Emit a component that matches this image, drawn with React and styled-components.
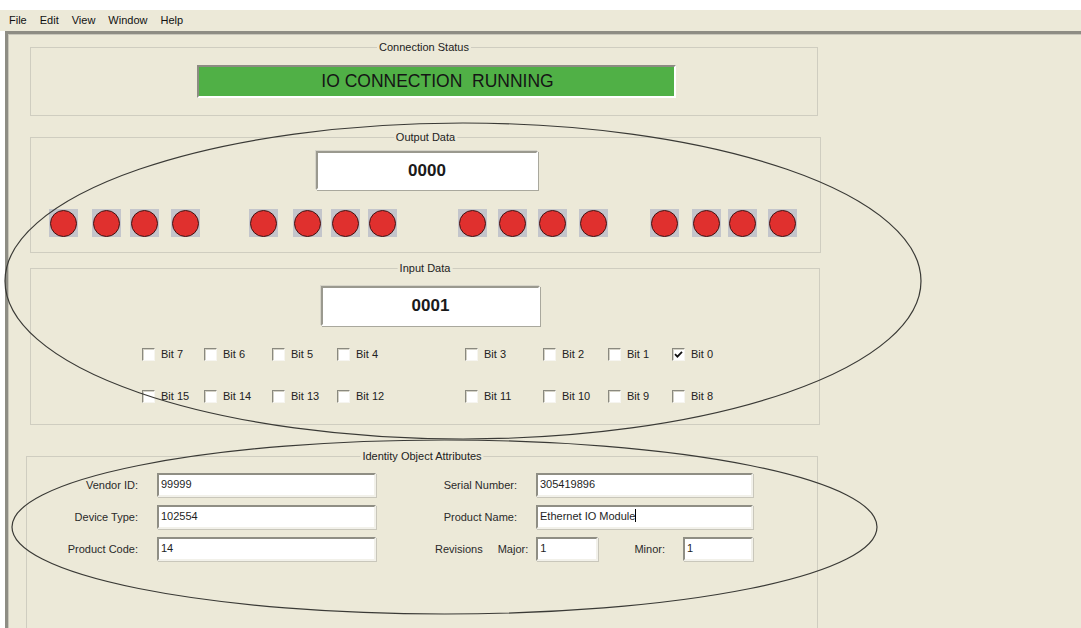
import React from "react";
import styled, { createGlobalStyle } from "styled-components";

const GlobalStyle = createGlobalStyle`
  html, body { margin: 0; padding: 0; background: #ffffff; }
  body { font-family: "Liberation Sans", Arial, sans-serif; }
  * { box-sizing: border-box; }
`;

const Page = styled.div`
  position: relative;
  width: 1081px;
  height: 628px;
  overflow: hidden;
  background: #ffffff;
  padding-top: 10px;
  display: flex;
  flex-direction: column;
`;

const MenuBar = styled.div`
  height: 21px;
  flex: none;
  background: #ece9d8;
  display: flex;
  align-items: center;
  padding-left: 2.5px;
  font-size: 11px;
  color: #111;
`;

const MenuItem = styled.span`
  padding: 0 6.5px;
  line-height: 21px;
`;

const Window = styled.div`
  flex: 1;
  margin-left: 5px;
  background: #ece9d8;
  border-top: 3px solid #8e8d84;
  border-left: 3px solid #8e8d84;
  box-shadow: inset 1px 1px 0 #c9c7bb;
  display: flex;
  flex-direction: column;
  align-items: flex-start;
`;

const Group = styled.div`
  position: relative;
  flex: none;
  margin-top: ${(p) => p.$top}px;
  margin-left: ${(p) => p.$left}px;
  width: ${(p) => p.$w}px;
  height: ${(p) => p.$h}px;
  border: 1px solid #cfcdc0;
  display: flex;
  flex-direction: column;
  align-items: flex-start;
`;

const GroupTitle = styled.span`
  position: absolute;
  top: -7px;
  left: 50%;
  transform: translateX(-50%);
  padding: 0 2px;
  background: #ece9d8;
  font-size: 11px;
  line-height: 13px;
  color: #222;
  white-space: nowrap;
`;

const StatusBar = styled.div`
  margin-top: 17px;
  margin-left: 166px;
  width: 479px;
  height: 33px;
  background: #50b046;
  border-style: solid;
  border-width: 2px;
  border-color: #8c8b82 #ffffff #ffffff #8c8b82;
  display: flex;
  align-items: center;
  justify-content: center;
  font-size: 17.5px;
  color: #151515;
  white-space: pre;
  padding-left: 2px;
`;

const ValueBox = styled.div`
  margin-top: ${(p) => p.$top}px;
  margin-left: ${(p) => p.$left}px;
  width: ${(p) => p.$w}px;
  height: ${(p) => p.$h}px;
  background: #ffffff;
  border-style: solid;
  border-width: 2px;
  border-color: #9a998f #ffffff #ffffff #9a998f;
  box-shadow: 1px 1px 0 #a9a89d, -1px -1px 0 #d6d4c8;
  display: flex;
  align-items: center;
  justify-content: center;
  font-size: 17px;
  font-weight: bold;
  color: #1a1a1a;
`;

const LedRow = styled.div`
  margin-top: 19px;
  display: flex;
  align-items: center;
`;

const Led = styled.div`
  flex: none;
  width: 29px;
  height: 28px;
  margin-left: ${(p) => p.$ml}px;
  background: #c3c5cb;
  display: flex;
  align-items: center;
  justify-content: center;
  &::after {
    content: "";
    width: 25px;
    height: 25px;
    border-radius: 50%;
    background: #e0302e;
    border: 1px solid #3e1414;
  }
`;

const CheckGrid = styled.div`
  margin-top: 18px;
  margin-left: 111px;
  display: grid;
  grid-template-columns: 62px 68px 65px 128px 78px 65px 64px auto;
  grid-auto-rows: 20px;
  row-gap: 22px;
`;

const CheckCell = styled.label`
  display: flex;
  align-items: center;
  gap: 6px;
  font-size: 11px;
  color: #222;
  white-space: nowrap;
`;

const Box = styled.span`
  width: 13px;
  height: 13px;
  flex: none;
  background: #ffffff;
  border-style: solid;
  border-width: 1px;
  border-color: #8a897f #f6f5f0 #f6f5f0 #8a897f;
  box-shadow: inset 1px 1px 0 #d4d2c6;
  display: flex;
  align-items: center;
  justify-content: center;
`;

const Form = styled.div`
  margin-top: 16px;
  display: flex;
`;

const FieldGrid = styled.div`
  display: grid;
  grid-template-columns: ${(p) => p.$label}px ${(p) => p.$input}px;
  column-gap: ${(p) => p.$gap}px;
  grid-auto-rows: 24px;
  row-gap: 8px;
  margin-left: ${(p) => p.$left}px;
  align-items: center;
`;

const Label = styled.span`
  font-size: 11px;
  color: #2a2a2a;
  text-align: right;
  white-space: nowrap;
  margin-left: ${(p) => p.$ml || 0}px;
`;

const Field = styled.div`
  width: ${(p) => (p.$w ? `${p.$w}px` : "auto")};
  margin-left: ${(p) => p.$ml || 0}px;
  height: 24px;
  background: #ffffff;
  border-style: solid;
  border-width: 2px;
  border-color: #8f8e84 #f2f1ea #f2f1ea #8f8e84;
  box-shadow: 1px 1px 0 #c9c7bb;
  font-size: 11px;
  line-height: 14px;
  padding: 2px 2px;
  color: #1e1e1e;
  white-space: nowrap;
`;

const Caret = styled.span`
  display: inline-block;
  width: 1px;
  height: 13px;
  background: #000;
  vertical-align: -2px;
`;

const RevRow = styled.div`
  grid-column: 1 / -1;
  display: flex;
  align-items: center;
  height: 24px;
  padding-left: 18px;
`;

const Overlay = styled.svg`
  position: absolute;
  left: 0;
  top: 0;
  pointer-events: none;
`;

const menus = ["File", "Edit", "View", "Window", "Help"];

const leds = [18, 14, 9, 12, 49, 15, 9, 8, 61, 11, 11, 12, 42, 13, 7, 11];

const bits = [
  ["Bit 7", false], ["Bit 6", false], ["Bit 5", false], ["Bit 4", false],
  ["Bit 3", false], ["Bit 2", false], ["Bit 1", false], ["Bit 0", true],
  ["Bit 15", false], ["Bit 14", false], ["Bit 13", false], ["Bit 12", false],
  ["Bit 11", false], ["Bit 10", false], ["Bit 9", false], ["Bit 8", false],
];

const leftFields = [
  ["Vendor ID:", "99999"],
  ["Device Type:", "102554"],
  ["Product Code:", "14"],
];

function Check({ checked }) {
  return (
    <Box>
      {checked && (
        <svg width="9" height="9" viewBox="0 0 9 9">
          <path d="M1 4.2 L3.4 6.6 L8 1.8" fill="none" stroke="#111" strokeWidth="1.8" />
        </svg>
      )}
    </Box>
  );
}

export default function App() {
  return (
    <>
      <GlobalStyle />
      <Page>
        <MenuBar>
          {menus.map((m) => (
            <MenuItem key={m}>{m}</MenuItem>
          ))}
        </MenuBar>
        <Window>
          <Group $top={13} $left={22} $w={788} $h={69}>
            <GroupTitle>Connection Status</GroupTitle>
            <StatusBar>{"IO CONNECTION  RUNNING"}</StatusBar>
          </Group>

          <Group $top={21} $left={22} $w={791} $h={116}>
            <GroupTitle>Output Data</GroupTitle>
            <ValueBox $top={13} $left={285} $w={222} $h={39}>0000</ValueBox>
            <LedRow>
              {leds.map((ml, i) => (
                <Led key={i} $ml={ml} />
              ))}
            </LedRow>
          </Group>

          <Group $top={15} $left={22} $w={790} $h={157}>
            <GroupTitle>Input Data</GroupTitle>
            <ValueBox $top={17} $left={290} $w={219} $h={40}>0001</ValueBox>
            <CheckGrid>
              {bits.map(([name, on]) => (
                <CheckCell key={name}>
                  <Check checked={on} />
                  {name}
                </CheckCell>
              ))}
            </CheckGrid>
          </Group>

          <Group $top={31} $left={18} $w={792} $h={200}>
            <GroupTitle>Identity Object Attributes</GroupTitle>
            <Form>
              <FieldGrid $label={111} $input={219} $gap={19} $left={0}>
                {leftFields.map(([l, v]) => (
                  <React.Fragment key={l}>
                    <Label>{l}</Label>
                    <Field>{v}</Field>
                  </React.Fragment>
                ))}
              </FieldGrid>
              <FieldGrid $label={100} $input={217} $gap={19} $left={41}>
                <Label>Serial Number:</Label>
                <Field>305419896</Field>
                <Label>Product Name:</Label>
                <Field>
                  Ethernet IO Module<Caret />
                </Field>
                <RevRow>
                  <Label>Revisions</Label>
                  <Label $ml={15}>Major:</Label>
                  <Field $w={63} $ml={8}>1</Field>
                  <Label $ml={36}>Minor:</Label>
                  <Field $w={71} $ml={18}>1</Field>
                </RevRow>
              </FieldGrid>
            </Form>
          </Group>
        </Window>
        <Overlay width="1081" height="628" viewBox="0 0 1081 628">
          <ellipse cx="463" cy="281" rx="458" ry="158" fill="none" stroke="#3a3a36" strokeWidth="1.2" />
          <ellipse cx="444.5" cy="527" rx="432.5" ry="87" fill="none" stroke="#3a3a36" strokeWidth="1.2" />
        </Overlay>
      </Page>
    </>
  );
}
